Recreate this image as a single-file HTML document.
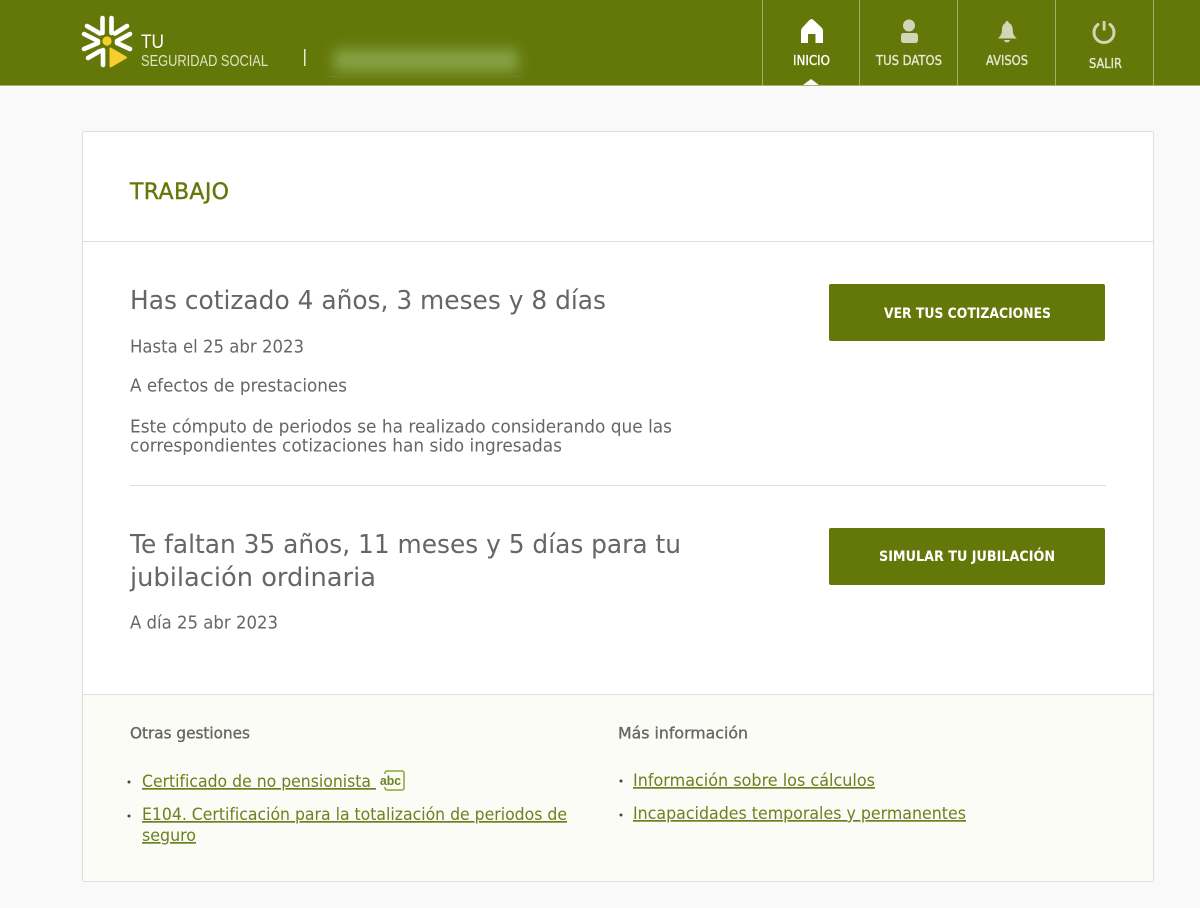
<!DOCTYPE html>
<html lang="es"><head><meta charset="utf-8"><title>Tu Seguridad Social</title>
<style>
html,body{margin:0;padding:0;width:1200px;height:908px;overflow:hidden;background:#f9f9f9}
svg{display:block}
text{font-family:"DejaVu Sans","Liberation Sans",sans-serif;white-space:pre}
.h{fill:#666;font-size:26px}
.p{fill:#666;font-size:18px}
.b{fill:#666;font-size:16px;stroke:#666;stroke-width:.35}
.l{fill:#6b8020;font-size:17px;text-decoration:underline}
.n{font-size:13px;fill:#fff;stroke:#fff;stroke-width:.35}
.m{font-size:13px;fill:#e6e8d2;stroke:#e6e8d2;stroke-width:.35}
.w{font-size:14px;font-weight:bold;fill:#fff}
</style></head><body>
<svg width="1200" height="908" viewBox="0 0 1200 908" xmlns="http://www.w3.org/2000/svg">
<defs><filter id="bl" x="-20%" y="-80%" width="140%" height="260%"><feGaussianBlur stdDeviation="6"/></filter></defs>
<rect width="1200" height="908" fill="#f9f9f9"/>
<rect width="1200" height="85" fill="#64780a"/>
<rect y="85" width="1200" height="1" fill="#a8b570"/>
<!-- logo -->
<g stroke="#fff" stroke-width="4.600" stroke-linecap="round" fill="none">
<path d="M102.500 18V33M111.500 18V33"/>
<path d="M87 26L100 33.500M127 26L115 33.500"/>
<path d="M84 34L98 41M130 34L117 41"/>
<path d="M84 49L98 43M130 49L117 43"/>
<path d="M88 58L100 51"/>
<path d="M103 50V65"/>
</g>
<circle cx="107" cy="41" r="4.600" fill="#f5cf2c"/>
<path d="M110.500 48.500L126 57.500L110.500 66.500Z" fill="#f5cf2c" stroke="#f5cf2c" stroke-width="2" stroke-linejoin="round"/>
<text x="141" y="48" font-size="19" fill="#fff" textLength="23" lengthAdjust="spacingAndGlyphs" style="font-family:'Liberation Sans',sans-serif">TU</text>
<text x="141" y="66" font-size="15.500" fill="#dfe4c4" textLength="127" lengthAdjust="spacingAndGlyphs" style="font-family:'Liberation Sans',sans-serif">SEGURIDAD SOCIAL</text>
<rect x="304" y="49" width="1.500" height="17" fill="#e8ecd4"/>
<rect x="334" y="49" width="184" height="23" fill="#84a042" filter="url(#bl)"/>
<rect x="329" y="76" width="193" height="1" fill="#6f8424"/>
<!-- nav dividers -->
<g fill="#a3b06c"><rect x="762" width="1" height="85"/><rect x="859" width="1" height="85"/><rect x="957" width="1" height="85"/><rect x="1055" width="1" height="85"/><rect x="1153" width="1" height="85"/></g>
<path d="M811.500 19Q812.500 19 814 20.500L821 27Q823 29 823 31V43H815.500V34H808V43H801V31Q801 29 802.500 27.500L809 20.500Q810.500 19 811.500 19Z" fill="#fff"/>
<circle cx="909" cy="25.500" r="6" fill="#d2d5b8"/><rect x="901" y="33" width="17" height="10" rx="2.500" fill="#d2d5b8"/>
<path d="M1007 21c1.300 0 1.800 1 1.800 2c3 1 4 4 4 7.500c0 4 2 6 4 8H998c2-2 4-4.500 4-8.500c0-3.500 1-6 3.500-7c0-1 .2-2 1.500-2Z" fill="#d2d5b8"/><path d="M1004 40h6c-.5 1.800-1.500 2.300-3 2.300s-2.500-.5-3-2.300Z" fill="#d2d5b8"/>
<path d="M1098 24.500A10 10 0 1 0 1110 24.500" fill="none" stroke="#d2d5b8" stroke-width="3" stroke-linecap="round"/><rect x="1102.700" y="21" width="2.800" height="9.500" fill="#d2d5b8"/>
<path d="M803 85L811 79L819 85Z" fill="#f9f9f9"/>
<text class="n" x="793" y="65" textLength="37" lengthAdjust="spacingAndGlyphs">INICIO</text>
<text class="m" x="876" y="65" textLength="66" lengthAdjust="spacingAndGlyphs">TUS DATOS</text>
<text class="m" x="986" y="65" textLength="42" lengthAdjust="spacingAndGlyphs">AVISOS</text>
<text class="m" x="1089" y="68" textLength="33" lengthAdjust="spacingAndGlyphs">SALIR</text>
<!-- card -->
<rect x="82.500" y="131.500" width="1071" height="750" rx="2" fill="#fff" stroke="#dedede"/>
<path d="M83 695H1153V880a1 1 0 0 1-1 1H84a1 1 0 0 1-1-1Z" fill="#fbfcf6"/>
<rect x="83" y="241" width="1070" height="1" fill="#dedede"/>
<rect x="83" y="694" width="1070" height="1" fill="#dedede"/>
<rect x="130" y="485" width="976" height="1" fill="#dedede"/>
<text x="130" y="199" font-size="22" fill="#64780a" stroke="#64780a" stroke-width=".4" textLength="99">TRABAJO</text>
<text class="h" x="130" y="309" textLength="476" lengthAdjust="spacingAndGlyphs">Has cotizado 4 años, 3 meses y 8 días</text>
<text class="p" x="130" y="352.500" textLength="174" lengthAdjust="spacingAndGlyphs">Hasta el 25 abr 2023</text>
<text class="p" x="130" y="391.500" textLength="217" lengthAdjust="spacingAndGlyphs">A efectos de prestaciones</text>
<text class="p" x="130" y="432.500" textLength="542" lengthAdjust="spacingAndGlyphs">Este cómputo de periodos se ha realizado considerando que las</text>
<text class="p" x="130" y="451.500" textLength="432" lengthAdjust="spacingAndGlyphs">correspondientes cotizaciones han sido ingresadas</text>
<text class="h" x="130" y="553" textLength="551" lengthAdjust="spacingAndGlyphs">Te faltan 35 años, 11 meses y 5 días para tu</text>
<text class="h" x="130" y="586" textLength="246" lengthAdjust="spacingAndGlyphs">jubilación ordinaria</text>
<text class="p" x="130" y="628.500" textLength="148" lengthAdjust="spacingAndGlyphs">A día 25 abr 2023</text>
<rect x="829" y="284" width="276" height="57" rx="2" fill="#64780a"/>
<rect x="829" y="528" width="276" height="57" rx="2" fill="#64780a"/>
<text class="w" x="884" y="318" textLength="167" lengthAdjust="spacingAndGlyphs">VER TUS COTIZACIONES</text>
<text class="w" x="879" y="561" textLength="176" lengthAdjust="spacingAndGlyphs">SIMULAR TU JUBILACIÓN</text>
<!-- footer -->
<text class="b" x="130" y="738.500" textLength="120" lengthAdjust="spacingAndGlyphs">Otras gestiones</text>
<text class="b" x="618" y="738.500" textLength="130" lengthAdjust="spacingAndGlyphs">Más información</text>
<circle cx="129" cy="782" r="1.500" fill="#444"/><circle cx="129" cy="816" r="1.500" fill="#444"/>
<circle cx="621" cy="781" r="1.500" fill="#444"/><circle cx="621" cy="815" r="1.500" fill="#444"/>
<text class="l" x="142" y="787" textLength="234" lengthAdjust="spacingAndGlyphs">Certificado de no pensionista </text>
<text class="l" x="142" y="820" textLength="425" lengthAdjust="spacingAndGlyphs">E104. Certificación para la totalización de periodos de</text>
<text class="l" x="142" y="841" textLength="54" lengthAdjust="spacingAndGlyphs">seguro</text>
<text class="l" x="633" y="786" textLength="242" lengthAdjust="spacingAndGlyphs">Información sobre los cálculos</text>
<text class="l" x="633" y="819" textLength="333" lengthAdjust="spacingAndGlyphs">Incapacidades temporales y permanentes</text>
<rect x="385" y="771" width="19" height="19" rx="2" fill="none" stroke="#8aa43c" stroke-width="1.500"/>
<rect x="379" y="774" width="8" height="13" fill="#fbfcf6"/>
<text x="380" y="785" font-size="13" font-weight="bold" fill="#6b8020" textLength="21" lengthAdjust="spacingAndGlyphs" style="font-family:'Liberation Sans',sans-serif">abc</text>
</svg>
</body></html>
